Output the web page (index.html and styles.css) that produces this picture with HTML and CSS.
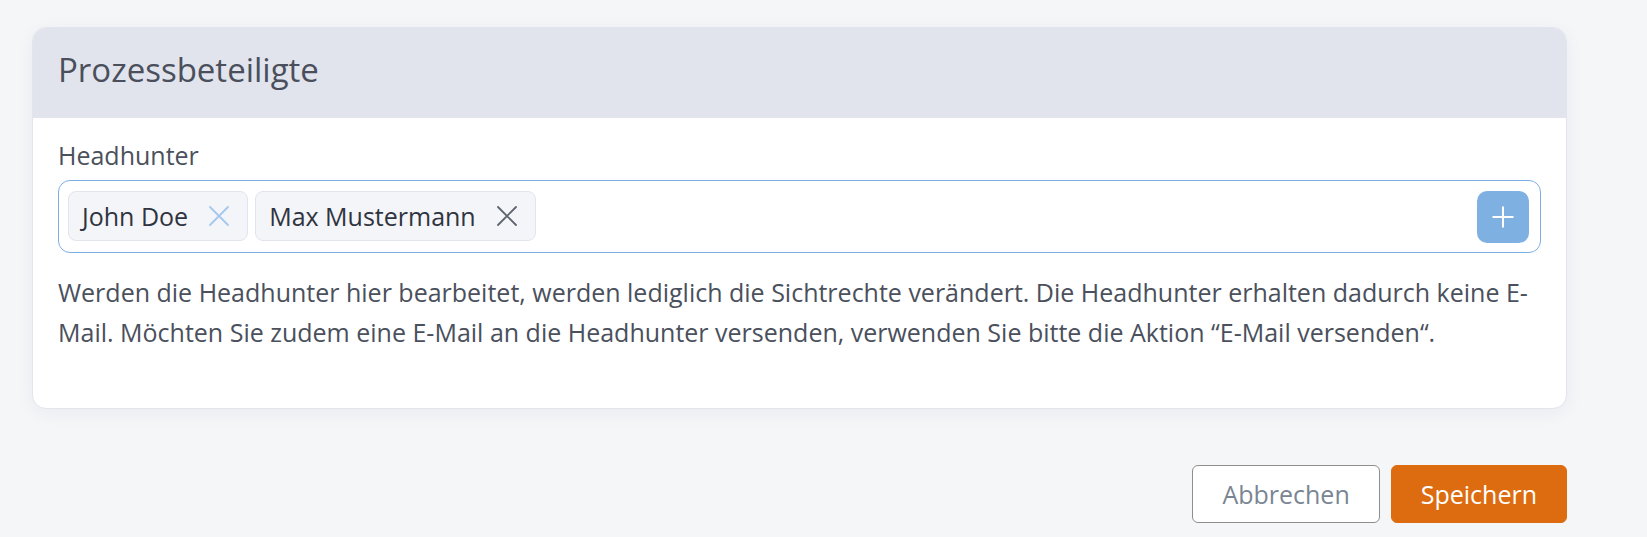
FILE: index.html
```html
<!DOCTYPE html>
<html lang="de">
<head>
<meta charset="utf-8">
<title>Prozessbeteiligte</title>
<link rel="stylesheet" href="styles.css">
</head>
<body>
<main class="page">
  <section class="card">
    <header class="card-header">
      <h1 class="card-title">Prozessbeteiligte</h1>
    </header>
    <div class="card-body">
      <label class="field-label">Headhunter</label>
      <div class="tag-input">
        <div class="tags">
          <span class="tag">
            <span class="tag-text">John Doe</span>
            <span class="tag-remove tag-remove-light">
              <svg viewBox="0 0 20 20" width="20" height="20"><path d="M1 1 L19 19 M19 1 L1 19" fill="none" stroke="currentColor" stroke-width="1.8" stroke-linecap="round"/></svg>
            </span>
          </span>
          <span class="tag">
            <span class="tag-text">Max Mustermann</span>
            <span class="tag-remove">
              <svg viewBox="0 0 20 20" width="20" height="20"><path d="M1 1 L19 19 M19 1 L1 19" fill="none" stroke="currentColor" stroke-width="1.8" stroke-linecap="round"/></svg>
            </span>
          </span>
        </div>
        <button class="add-btn" type="button" aria-label="Hinzufügen">
          <svg viewBox="0 0 22 22" width="22" height="22"><path d="M11 0.5 V21.5 M0.5 11 H21.5" fill="none" stroke="#ffffff" stroke-width="2"/></svg>
        </button>
      </div>
      <p class="hint">Werden die Headhunter hier bearbeitet, werden lediglich die Sichtrechte verändert. Die Headhunter erhalten dadurch keine E-Mail. Möchten Sie zudem eine E-Mail an die Headhunter versenden, verwenden Sie bitte die Aktion “E-Mail versenden“.</p>
    </div>
  </section>
  <div class="actions">
    <button class="btn btn-secondary" type="button">Abbrechen</button>
    <button class="btn btn-primary" type="button">Speichern</button>
  </div>
</main>
</body>
</html>
```
FILE: styles.css
```css
* { box-sizing: border-box; }

html, body {
  margin: 0;
  padding: 0;
  background: #f5f6f8;
}

body {
  font-family: "Open Sans", "Noto Sans", sans-serif;
  color: #4a505c;
}

.page {
  width: 1535px;
  margin-left: 32px;
  padding-top: 27px;
}

.card {
  background: #ffffff;
  border: 1px solid #e2e5ec;
  border-radius: 14px;
  overflow: hidden;
  box-shadow: 0 4px 18px rgba(30, 40, 70, 0.05);
}

.card-header {
  background: #e1e4ed;
  height: 90px;
  padding: 22px 25px 0;
}

.card-title {
  margin: 0;
  font-size: 33px;
  line-height: 40px;
  font-weight: 400;
  color: #4a4f5b;
}

.card-body {
  padding: 17px 25px 56px;
}

.field-label {
  display: block;
  font-size: 25px;
  line-height: 40px;
  color: #4b515c;
  margin-bottom: 5px;
}

.tag-input {
  display: flex;
  align-items: flex-start;
  justify-content: space-between;
  height: 73px;
  border: 1px solid #7eaee0;
  border-radius: 12px;
  padding: 10px 11px 9px 9px;
}

.tags {
  display: flex;
  gap: 7px;
}

.tag {
  display: flex;
  align-items: center;
  height: 50px;
  padding: 0 18px 0 13px;
  background: #f4f5f8;
  border: 1px solid #e1e4ec;
  border-radius: 8px;
  font-size: 25px;
  color: #2f3440;
}

.tag-remove {
  display: flex;
  margin-left: 21px;
  color: #5d6470;
}

.tag-remove-light {
  color: #a6c7ec;
}

.add-btn {
  width: 52px;
  height: 52px;
  border: 0;
  border-radius: 10px;
  background: #7eb0e2;
  display: flex;
  align-items: center;
  justify-content: center;
  padding: 0;
}

.hint {
  margin: 19px 0 0;
  font-size: 25px;
  line-height: 40px;
  color: #4a505c;
}

.actions {
  display: flex;
  justify-content: flex-end;
  gap: 11px;
  margin-top: 56px;
}

.btn {
  height: 58px;
  padding: 0 29px;
  border-radius: 6px;
  font-family: "Open Sans", "Noto Sans", sans-serif;
  font-size: 25px;
  line-height: 40px;
}

.btn-secondary {
  background: #ffffff;
  border: 1px solid #8e8e8e;
  color: #7a8593;
}

.btn-primary {
  background: #dd6c10;
  border: 1px solid #dd6c10;
  color: #ffffff;
}
```
